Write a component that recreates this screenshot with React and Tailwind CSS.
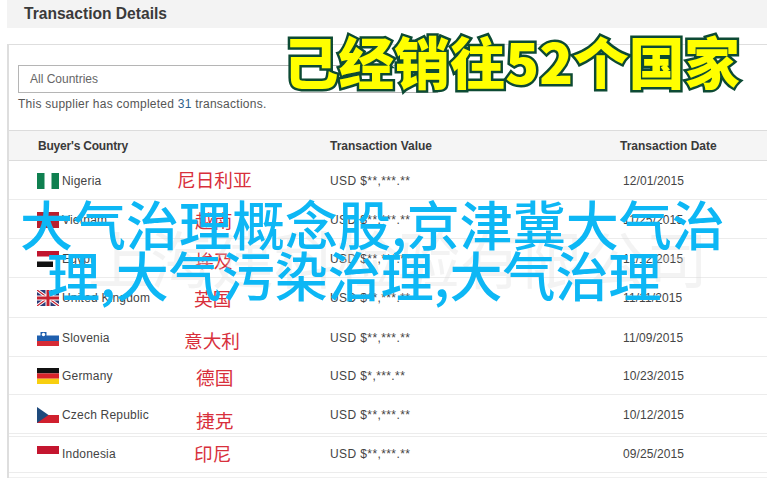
const font = "font-['Liberation_Sans',Arial,sans-serif]";
const cjk = "font-['Noto_Sans_CJK_SC','Noto_Sans',sans-serif]";

function Nigeria() {
  return (
    <svg width="22" height="16" viewBox="0 0 22 16">
      <rect width="7.5" height="16" fill="#0f8050" />
      <rect x="14.5" width="7.5" height="16" fill="#0f8050" />
    </svg>
  );
}

function Vietnam() {
  return (
    <svg width="22" height="16" viewBox="0 0 22 16">
      <rect width="22" height="16" fill="#b8202e" />
      <path d="M11 4l1.2 3h3l-2.4 2 .9 3-2.7-1.8L8.300 12l.9-3-2.400-2h3z" fill="#f4d03f" />
    </svg>
  );
}

function Egypt() {
  return (
    <svg width="22" height="16" viewBox="0 0 22 16">
      <rect width="22" height="5.500" fill="#c1162f" />
      <rect y="10.500" width="16" height="5.500" fill="#111" />
    </svg>
  );
}

function UnitedKingdom() {
  return (
    <svg width="22" height="16" viewBox="0 0 22 16">
      <rect width="22" height="16" fill="#2b3a77" />
      <path d="M0 0l22 16M22 0L0 16" stroke="#fff" strokeWidth="3.200" />
      <path d="M0 0l22 16M22 0L0 16" stroke="#c8202f" strokeWidth="1.200" />
      <path d="M11 0v16M0 8h22" stroke="#fff" strokeWidth="5" />
      <path d="M11 0v16M0 8h22" stroke="#c8202f" strokeWidth="3" />
    </svg>
  );
}

function Slovenia() {
  return (
    <svg width="22" height="16" viewBox="0 0 22 16">
      <rect y="5.500" width="22" height="5.500" fill="#1f5fae" />
      <rect y="11" width="22" height="5" fill="#d62b35" />
      <path d="M3.500 2h6v5q-3 3-6 0z" fill="#1f5fae" />
      <circle cx="6.500" cy="4.500" r="1.700" fill="#fff" />
    </svg>
  );
}

function Germany() {
  return (
    <svg width="22" height="16" viewBox="0 0 22 16">
      <rect width="22" height="5.400" fill="#111" />
      <rect y="5.400" width="22" height="5.300" fill="#d8242a" />
      <rect y="10.700" width="22" height="5.300" fill="#f8cf10" />
    </svg>
  );
}

function Czech() {
  return (
    <svg width="22" height="16" viewBox="0 0 22 16">
      <rect y="8" width="22" height="8" fill="#d0202e" />
      <path d="M0 0l11.500 8L0 16z" fill="#1e4a7c" />
    </svg>
  );
}

function Indonesia() {
  return (
    <svg width="22" height="16" viewBox="0 0 22 16">
      <rect width="22" height="8" fill="#c4162f" />
    </svg>
  );
}

const rows = [
  { name: 'Nigeria', flag: Nigeria, value: 'USD $**,***.**', date: '12/01/2015', cn: '尼日利亚', cnPos: 'left-[168px] top-[5px]', box: 'h-[39px] pt-px' },
  { name: 'Vietnam', flag: Vietnam, value: 'USD $**,***.**', date: '11/25/2015', cn: '越南', cnPos: 'left-[186px] top-[7px]', box: 'h-[39px] pt-px' },
  { name: 'Egypt', flag: Egypt, value: 'USD $**,***.**', date: '11/12/2015', cn: '埃及', cnPos: 'left-[186px] top-[8px]', box: 'h-[39px] pt-px' },
  { name: 'United Kingdom', flag: UnitedKingdom, value: 'USD $**,***.**', date: '11/11/2015', cn: '英国', cnPos: 'left-[185px] top-[7px]', box: 'h-[40px] pt-px' },
  { name: 'Slovenia', flag: Slovenia, value: 'USD $**,***.**', date: '11/09/2015', cn: '意大利', cnPos: 'left-[175px] top-[9px]', box: 'h-[39px] pt-px' },
  { name: 'Germany', flag: Germany, value: 'USD $*,***.**', date: '10/23/2015', cn: '德国', cnPos: 'left-[187px] top-[7px]', box: 'h-[38px] pt-px' },
  { name: 'Czech Republic', flag: Czech, value: 'USD $**,***.**', date: '10/12/2015', cn: '捷克', cnPos: 'left-[187px] top-[12px]', box: 'h-[39px] pt-px' },
  { name: 'Indonesia', flag: Indonesia, value: 'USD $**,***.**', date: '09/25/2015', cn: '印尼', cnPos: 'left-[185px] top-[3px]', box: 'mt-[2px] h-[37px] border-t pb-px' },
];

function Row({ row }) {
  const Flag = row.flag;
  return (
    <div className={`relative flex items-center border-b border-[#ececec] text-[12px] text-[#444] ${row.box}`}>
      <div className="flex w-[321px] items-center gap-[3px] pl-[28px] tracking-[0.2px]">
        <Flag />
        <span>{row.name}</span>
      </div>
      <div className="w-[290px] tracking-[0.4px]">{row.value}</div>
      <div className="pl-[3px] tracking-[0.1px]">{row.date}</div>
      <span className={`absolute text-[18.700px] leading-[26px] text-[#d8303c] ${cjk} ${row.cnPos}`}>{row.cn}</span>
    </div>
  );
}

export default function App() {
  return (
    <div className={`relative h-[493px] w-[767px] overflow-hidden bg-white ${font}`}>
      <div className="ml-[7px] flex h-[28px] items-center bg-[#f3f3f3] pl-[17px] text-[15.600px] font-bold text-[#3a3a3a]">
        Transaction Details
      </div>

      <div className="ml-[7px] mt-[16px] border-l-2 border-t border-[#dedede]">
        <div className="flex h-[85px] flex-col pl-[9px] pt-[20px]">
          <div className="flex h-[28px] w-[420px] items-center border border-[#b5b5b5] pl-[11px] text-[12px] text-[#666]">
            All Countries
          </div>
          <p className="mt-[2px] text-[12px] tracking-[0.25px] text-[#555]">
            This supplier has completed <span className="text-[#2f5f8a]">31</span> transactions.
          </p>
        </div>
        <div className="flex h-[31px] items-center border-y border-[#dcdcdc] bg-[#f5f5f5] text-[12px] font-bold text-[#3a3a3a]">
          <div className="w-[321px] pl-[29px] tracking-[-0.2px]">Buyer's Country</div>
          <div className="w-[290px]">Transaction Value</div>
          <div>Transaction Date</div>
        </div>
        {rows.map((row) => (
          <Row key={row.name} row={row} />
        ))}
        <div className="mt-[4px] h-px bg-[#f0f0f0]" />
      </div>

      <div className={`absolute left-[88px] top-[222px] whitespace-nowrap text-[62px] leading-[70px] text-[#d8d8d8]/30 ${cjk}`}>
        上海建科检验有限公司
      </div>

      <div className={`absolute left-[283px] top-[25px] whitespace-nowrap text-[55.600px] font-black leading-[70px] text-[#ffff00] [-webkit-text-stroke:5px_#0d4a34] [paint-order:stroke_fill] ${cjk}`}>
        己经销往52个国家
      </div>

      <div className={`absolute left-[20px] top-[198px] text-[53px] font-medium leading-[51px] text-[#0db7f5] ${cjk}`}>
        <div className="whitespace-nowrap">大气治理概念股,京津冀大气治</div>
        <div className="whitespace-nowrap pl-[27px]">理,大气污染治理,大气治理</div>
      </div>
    </div>
  );
}
